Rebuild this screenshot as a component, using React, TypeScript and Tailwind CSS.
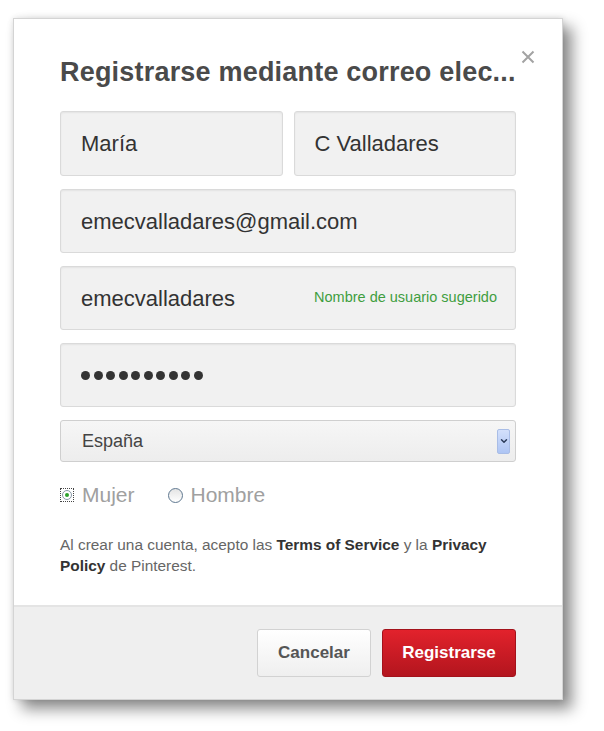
import { ChevronDown } from "lucide-react";

const font = { fontFamily: '"Liberation Sans", Arial, sans-serif' };

function Field({ children, className = "" }: { children: React.ReactNode; className?: string }) {
  return (
    <div
      className={`flex h-[64px] items-center rounded-[3px] border border-[#dadada] bg-[#f1f1f1] pl-[20px] pr-[18px] shadow-[inset_0_1px_2px_rgba(0,0,0,0.06)] ${className}`}
    >
      {children}
    </div>
  );
}

export default function App() {
  return (
    <div className="min-h-[731px] bg-white pl-[13px] pt-[18px]" style={font}>
      <div className="relative w-[550px] border border-[#d4d4d4] bg-white shadow-[9px_9px_14px_rgba(0,0,0,0.45),0_0_6px_rgba(0,0,0,0.12)]">
        {/* Close */}
        <button className="absolute right-[27px] top-[31px] text-[#a3a3a3]">
          <svg width="14" height="14" viewBox="0 0 14 14">
            <path d="M1.5 1.5 L12.5 12.5 M12.5 1.5 L1.5 12.5" stroke="currentColor" strokeWidth="2" />
          </svg>
        </button>

        <div className="px-[46px] pb-[29px] pt-[37px]">
          <h2 className="text-[27px] font-bold leading-[32px] tracking-[0.2px] text-[#4a4a4a]">
            Registrarse mediante correo elec...
          </h2>

          <div className="mt-[23px] flex flex-col gap-[13px] text-[22px] text-[#333]">
            <div className="flex gap-[11px]">
              <Field className="h-[65px] flex-1">María</Field>
              <Field className="h-[65px] flex-1">C Valladares</Field>
            </div>
            <Field>emecvalladares@gmail.com</Field>
            <Field className="justify-between">
              <span>emecvalladares</span>
              <span className="text-[14.5px] text-[#3f9e3f]">Nombre de usuario sugerido</span>
            </Field>
            <Field>
              <div className="flex gap-[3.5px]">
                {Array.from({ length: 10 }).map((_, i) => (
                  <span key={i} className="h-[9px] w-[9px] rounded-full bg-[#333]" />
                ))}
              </div>
            </Field>
            <div className="flex h-[42px] items-center justify-between rounded-[3px] border border-[#cfcfcf] bg-gradient-to-b from-[#f6f6f6] to-[#ededed] pl-[21px] pr-[5px]">
              <span className="text-[18px] text-[#444]">España</span>
              <span className="flex h-[25px] w-[13px] items-center justify-center rounded-[2px] border border-[#a9bde6] bg-gradient-to-b from-[#d3e0fb] to-[#aec5f4]">
                <ChevronDown className="h-[10px] w-[10px] text-[#2b3a5a]" strokeWidth={3.5} />
              </span>
            </div>
          </div>

          <div className="mt-[21px] flex items-center text-[21px] leading-[24px] text-[#a0a0a0]">
            <span className="flex h-[14px] w-[14px] items-center justify-center border border-dotted border-[#444]">
              <span className="flex h-[10px] w-[10px] items-center justify-center rounded-full border border-[#8a9aa8] bg-white">
                <span className="h-[4px] w-[4px] rounded-full bg-[#2da22d]" />
              </span>
            </span>
            <span className="ml-[8px]">Mujer</span>
            <span className="ml-[33px] h-[15px] w-[15px] rounded-full border-[1.5px] border-[#5f7890] bg-gradient-to-b from-[#e4e4e4] to-white" />
            <span className="ml-[8px]">Hombre</span>
          </div>

          <div className="mt-[27px] flex flex-col text-[15.4px] leading-[21px] text-[#666]">
            <span>
              Al crear una cuenta, acepto las <b className="text-[#333]">Terms of Service</b> y la{" "}
              <b className="text-[#333]">Privacy</b>
            </span>
            <span>
              <b className="text-[#333]">Policy</b> de Pinterest.
            </span>
          </div>
        </div>

        <div className="flex justify-end gap-[11px] border-t-2 border-[#e4e4e4] bg-[#efefef] px-[46px] py-[22px]">
          <button className="h-[48px] w-[114px] rounded-[3px] border border-[#d2d2d2] bg-gradient-to-b from-white to-[#efefef] text-[17px] font-bold text-[#555]">
            Cancelar
          </button>
          <button className="h-[48px] w-[134px] rounded-[3px] border border-[#a3121b] bg-gradient-to-b from-[#e2222c] to-[#b3151e] text-[17px] font-bold text-white">
            Registrarse
          </button>
        </div>
      </div>
    </div>
  );
}
